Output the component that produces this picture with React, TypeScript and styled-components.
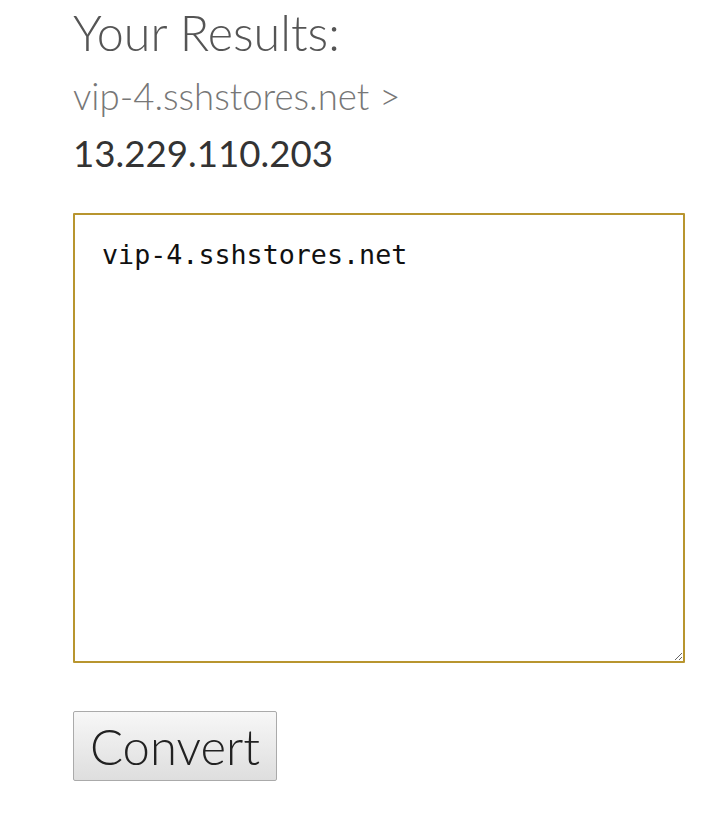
import React, { useState } from 'react';
import styled, { createGlobalStyle } from 'styled-components';

const GlobalStyle = createGlobalStyle`
  html, body {
    margin: 0;
    padding: 0;
    background: #fff;
    font-family: Lato, "Liberation Sans", sans-serif;
  }
`;

const Page = styled.div`
  padding: 3px 35px 0 73px;
  display: flex;
  flex-direction: column;
`;

const Title = styled.h2`
  margin: 0;
  font-weight: 300;
  font-size: 48.5px;
  line-height: 58px;
  color: #555;
`;

const Host = styled.div`
  font-weight: 300;
  font-size: 36.6px;
  line-height: 44px;
  margin-top: 13px;
  color: #777;
`;

const Address = styled.div`
  font-weight: 400;
  font-size: 36.7px;
  line-height: 44px;
  margin-top: 13px;
  color: #333;
`;

const ResultBox = styled.textarea`
  margin-top: 38px;
  box-sizing: border-box;
  width: 612px;
  height: 450px;
  padding: 22px 27px;
  border: 2px solid #b8952f;
  border-radius: 1px;
  font-family: "DejaVu Sans Mono", monospace;
  font-size: 26.7px;
  line-height: 36px;
  color: #111;
  resize: both;
  outline: none;
`;

const ConvertButton = styled.button`
  margin-top: 48px;
  align-self: flex-start;
  width: 204px;
  height: 70px;
  padding: 0;
  font-family: Lato, "Liberation Sans", sans-serif;
  font-weight: 300;
  font-size: 49px;
  color: #222;
  background: linear-gradient(#f7f7f7, #dedede);
  border: 1px solid #aaa;
  border-radius: 2px;
  cursor: pointer;
`;

export default function App() {
  const [text, setText] = useState('vip-4.sshstores.net');
  return (
    <>
      <GlobalStyle />
      <Page>
        <Title>Your Results:</Title>
        <Host>vip-4.sshstores.net &gt;</Host>
        <Address>13.229.110.203</Address>
        <ResultBox value={text} onChange={(e) => setText(e.target.value)} />
        <ConvertButton>Convert</ConvertButton>
      </Page>
    </>
  );
}
